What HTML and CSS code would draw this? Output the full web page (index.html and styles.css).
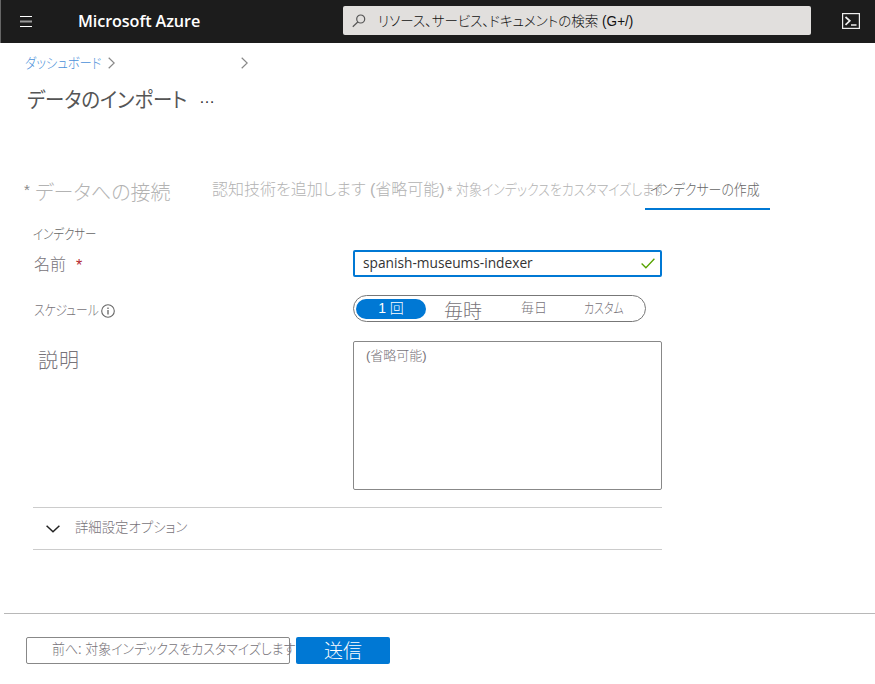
FILE: index.html
```html
<!DOCTYPE html>
<html lang="ja">
<head>
<meta charset="utf-8">
<title>データのインポート</title>
<link rel="stylesheet" href="styles.css">
</head>
<body>
<header class="topbar">
  <svg class="menu" width="12" height="11" viewBox="0 0 12 11"><path d="M0 .5h12M0 10.500h12" stroke="#fff"/><path d="M0 5.500h12" stroke="#999" stroke-width="2"/></svg>
  <span class="brand">Microsoft Azure</span>
  <div class="search">
    <svg width="14" height="14" viewBox="0 0 14 14" fill="none" stroke="#555" stroke-width="1.200"><circle cx="8.700" cy="5" r="4"/><path d="M5.800 8L.8 12.800"/></svg>
    <span class="search-text">リソース、サービス、ドキュメントの検索 (G+/)</span>
  </div>
  <svg class="shell" width="18" height="16" viewBox="0 0 18 16" fill="none" stroke="#eee"><rect x=".6" y=".6" width="16.800" height="14.800" stroke-width="1.200"/><path d="M3.500 4l4.300 3.800L3.500 11.800" stroke-width="1.700"/><path d="M9 12h5.500" stroke-width="1.500"/></svg>
</header>
<main>
  <nav class="crumbs">
    <a class="crumb">ダッシュボード</a>
    <svg class="chev first" width="7" height="12" viewBox="0 0 7 12"><path d="M.7.700L6.200 6 .7 11.300"/></svg>
    <svg class="chev" width="7" height="12" viewBox="0 0 7 12"><path d="M.7.700L6.200 6 .7 11.300"/></svg>
  </nav>
  <div class="heading"><h1>データのインポート</h1><span class="more">…</span></div>
  <div class="tabs">
    <span class="tab connect"><i class="star">*</i><span class="connect-text">データへの接続</span></span>
    <span class="tab skills">認知技術を追加します (省略可能)</span>
    <span class="tab target-star">*</span>
    <span class="tab target"><span class="target-text">対象インデックスをカスタマイズします</span></span>
    <span class="tab active"><span class="active-text">インデクサーの作成</span></span>
  </div>
  <section class="form">
    <h2>インデクサー</h2>
    <div class="row name-row">
      <label class="name-label"><span class="name-text">名前</span><b>*</b></label>
      <div class="input"><span class="value">spanish-museums-indexer</span>
        <svg width="14" height="11" viewBox="0 0 14 11" fill="none" stroke="#57a300" stroke-width="1.300"><path d="M.6 5.500l4.300 4.300L13.400.8"/></svg>
      </div>
    </div>
    <div class="row schedule-row">
      <label class="schedule-label"><span class="schedule-text">スケジュール</span>
        <svg width="14" height="14" viewBox="0 0 14 14" fill="none" stroke="#666"><circle cx="7" cy="7" r="6.300" stroke-width="1.100"/><path d="M7 6v4.500M7 3.500v1.400" stroke-width="1.300"/></svg>
      </label>
      <div class="choices">
        <span class="choice once">1 回</span>
        <span class="choice hourly">毎時</span>
        <span class="choice daily">毎日</span>
        <span class="choice custom">カスタム</span>
      </div>
    </div>
    <div class="row description-row">
      <label class="description-label">説明</label>
      <div class="textarea"><span class="placeholder">(省略可能)</span></div>
    </div>
    <div class="advanced">
      <svg width="14" height="8" viewBox="0 0 14 8" fill="none" stroke="#222" stroke-width="1.500"><path d="M.6.700L7 6.700 13.400.7"/></svg>
      <span class="advanced-text">詳細設定オプション</span>
    </div>
  </section>
</main>
<footer>
  <div class="previous"><span class="previous-text">前へ: 対象インデックスをカスタマイズします</span></div>
  <div class="submit"><span>送信</span></div>
</footer>
</body>
</html>
```
FILE: styles.css
```css
* { box-sizing: border-box; }
body {
  margin: 0;
  width: 875px;
  height: 684px;
  overflow: hidden;
  background: #fff;
  color: #777379;
  font-family: "Liberation Sans", "Noto Sans CJK JP", sans-serif;
  font-weight: 300;
  font-feature-settings: "palt";
  white-space: nowrap;
  display: flex;
  flex-direction: column;
}
svg { display: block; flex: none; }
span, a, label, h1, h2 { flex: none; }

/* Condensed proportional kana */
.crumb, h1, h2, .search-text, .target-text, .active-text, .schedule-text,
.custom, .advanced-text, .previous-text, .value { transform-origin: 0 50%; }
.target-text, .active-text, .previous-text { display: inline-block; }

.topbar { height: 43px; background: #1c1c1c; border-left: 1px solid #666; display: flex; align-items: flex-start; }
.menu { margin: 16px 0 0 19px; }
.brand { width: 265px; margin-left: 46px; font: 600 16.200px/42px "Open Sans", sans-serif; letter-spacing: -.1px; color: #fff; }
.search { width: 468px; height: 29px; margin-top: 6px; padding-left: 9px; border-radius: 2px; background: #e1dfdd; display: flex; align-items: center; }
.search-text { margin-left: 12px; font-size: 14px; line-height: 28px; color: #111; transform: scaleX(.966); }
.shell { margin: 13px 0 0 31px; }

.crumbs { height: 36px; padding: 14px 0 0 25px; display: flex; align-items: flex-start; }
.crumb { width: 83px; font-size: 14px; line-height: 12px; color: #4a90d9; transform: scaleX(.88); }
.chev { fill: none; stroke: #888; stroke-width: 1.200; }
.first { margin-right: 126px; }
.heading { height: 93px; padding: 6px 0 0 27px; display: flex; }
h1 { width: 172px; margin: 0; font-size: 21px; font-weight: 400; line-height: 30px; color: #555; transform: scaleX(.925); }
.more { font-size: 16px; line-height: 26px; color: #333; }

.tabs { height: 38px; padding-left: 24px; display: flex; color: #b3b3b3; font-size: 16px; line-height: 35px; }
.connect { width: 188px; display: flex; }
.star { width: 11px; font-style: normal; font-size: 15px; line-height: 36px; color: #888; }
.connect-text { font-size: 20px; line-height: 42px; }
.skills { width: 235px; }
.target-star { width: 9px; font-size: 14px; line-height: 38px; }
.target { width: 189px; font-size: 15px; }
.target-text { transform: scaleX(.862); }
.active { width: 125px; padding-left: 5px; border-bottom: 2px solid #0078d4; color: #666; font-size: 15px; }
.active-text { transform: scaleX(.86); line-height: 36px; }

.form { width: 662px; padding: 16px 0 0 33px; }
h2 { height: 24px; margin: 0; font-size: 14px; font-weight: 300; line-height: 17px; color: #666; transform: scaleX(.82); }
.row { display: flex; }
.row > label { width: 320px; display: flex; }
.name-row { height: 45px; }
.name-text { width: 42px; font-size: 16px; line-height: 29px; margin-left: 1px; }
.name-label b { font-size: 16px; line-height: 32px; color: #b3292e; }
.input { width: 309px; height: 27px; border: 2px solid #0078d4; border-radius: 2px; padding: 0 5px 0 8px; display: flex; align-items: center; justify-content: space-between; }
.value { font: 400 14px/22px "Open Sans", sans-serif; color: #333; transform: translateY(-1px) scaleX(.98); }
.schedule-row { height: 46px; }
.schedule-label { align-items: flex-start; }
.schedule-text { width: 67px; margin-left: 1px; font-size: 14px; line-height: 30px; transform: scaleX(.84); }
.schedule-label svg { margin-top: 9px; }
.choices { width: 293px; height: 27px; border: 1px solid #777; border-radius: 14px; padding: 3px 2px; display: flex; font-size: 14px; line-height: 18px; }
.once { width: 70px; height: 20px; border-radius: 10px; background: #0078d4; color: #fff; text-align: center; }
.hourly { width: 95px; padding-left: 18px; font-size: 19px; line-height: 25px; }
.daily { width: 63px; font-size: 13px; }
.custom { transform: scaleX(.78); }
.description-row { height: 166px; }
.description-label { padding-left: 5px; font-size: 20px; line-height: 41px; letter-spacing: 1px; }
.textarea { width: 309px; height: 149px; border: 1px solid #888; border-radius: 2px; padding: 4px 12px; }
.placeholder { display: block; font-size: 13px; line-height: 20px; }
.advanced { height: 43px; border-top: 1px solid #ccc; border-bottom: 1px solid #ccc; padding: 0 0 0 13px; display: flex; align-items: flex-start; }
.advanced svg { margin-top: 17px; }
.advanced-text { margin-left: 15px; font-size: 14px; line-height: 38px; transform: scaleX(.955); }

footer { height: 71px; margin: auto 0 0 4px; padding: 23px 0 0 22px; border-top: 1px solid #b8b8b8; display: flex; }
.previous { width: 264px; height: 27px; border: 1px solid #888; border-radius: 2px; padding-left: 25px; }
.previous-text { font-size: 14px; line-height: 22px; transform: scaleX(.925); }
.submit { width: 94px; height: 27px; margin-left: 6px; border-radius: 2px; background: #0078d4; color: #fff; font-size: 19px; line-height: 29px; text-align: center; }
```
